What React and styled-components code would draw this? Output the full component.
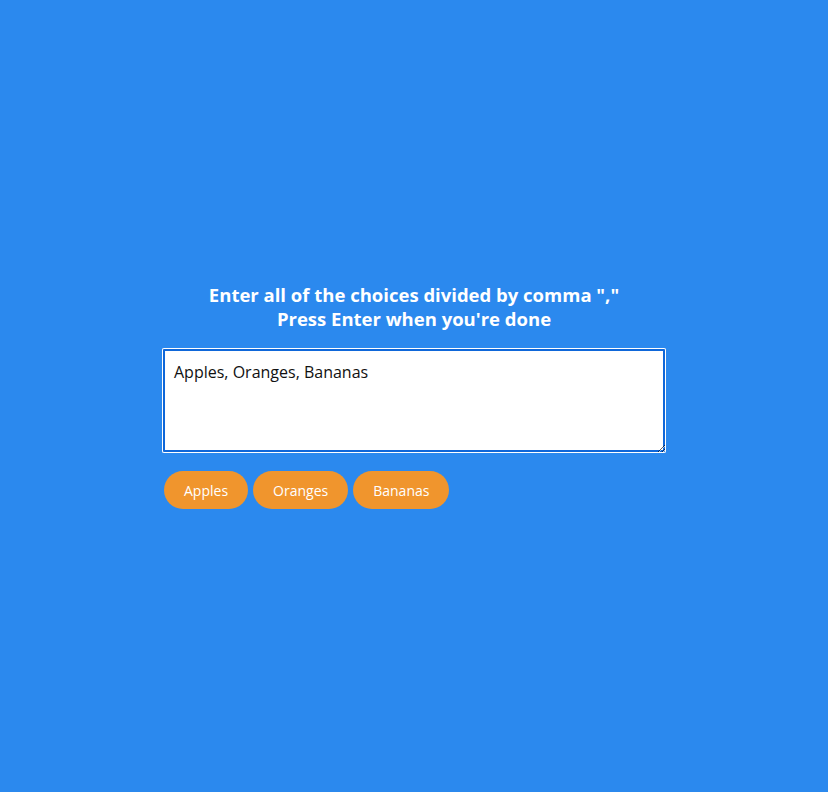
import React, { useState, useRef, useEffect } from "react";
import styled, { createGlobalStyle } from "styled-components";

const GlobalStyle = createGlobalStyle`
  html, body {
    margin: 0;
    padding: 0;
    height: 100%;
  }
  body {
    background-color: #2b89ee;
    font-family: "Open Sans", Lato, sans-serif;
  }
  #root {
    height: 100%;
  }
`;

const Page = styled.div`
  min-height: 100vh;
  display: flex;
  align-items: center;
  justify-content: center;
`;

const Container = styled.div`
  width: 504px;
  display: flex;
  flex-direction: column;
`;

const Title = styled.h3`
  margin: 0 0 17px 0;
  color: #ffffff;
  font-size: 18.5px;
  font-weight: 700;
  line-height: 24px;
  text-align: center;
`;

const Area = styled.textarea`
  box-sizing: border-box;
  width: 504px;
  height: 105px;
  padding: 13px 12px;
  border: none;
  border-radius: 2px;
  outline: none;
  resize: vertical;
  background: #ffffff;
  color: #111;
  caret-color: #111;
  font-family: "Open Sans", Lato, sans-serif;
  font-size: 16px;
  line-height: 22px;
  box-shadow: inset 0 0 0 1px #ffffff, inset 0 0 0 3px #0f67d9;
`;

const Choices = styled.div`
  display: flex;
  flex-wrap: wrap;
  gap: 5px;
  margin-top: 18px;
  padding-left: 2px;
`;

const Choice = styled.span`
  display: inline-flex;
  align-items: center;
  height: 38px;
  padding: 0 20px;
  border-radius: 19px;
  background-color: #f0952d;
  color: #ffffff;
  font-size: 14px;
`;

const App = () => {
  const [text, setText] = useState("Apples, Oranges, Bananas");
  const ref = useRef(null);

  useEffect(() => {
    const el = ref.current;
    if (el) {
      el.focus();
      el.setSelectionRange(text.length, text.length);
    }
  }, []);

  const choices = text
    .split(",")
    .map((c) => c.trim())
    .filter((c) => c !== "");

  return (
    <Page>
      <GlobalStyle />
      <Container>
        <Title>
          Enter all of the choices divided by comma ","
          <br />
          Press Enter when you're done
        </Title>
        <Area
          ref={ref}
          value={text}
          onChange={(e) => setText(e.target.value)}
        />
        <Choices>
          {choices.map((c, i) => (
            <Choice key={i}>{c}</Choice>
          ))}
        </Choices>
      </Container>
    </Page>
  );
};

export default App;
